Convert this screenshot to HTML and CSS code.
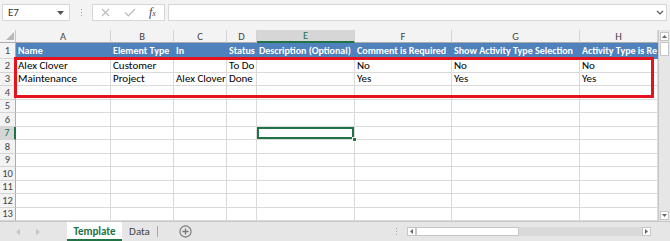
FILE: index.html
```html
<!DOCTYPE html>
<html lang="en">
<head>
    <meta charset="UTF-8">
    <title>Template - Excel</title>
    <link rel="stylesheet" href="styles.css">
</head>
<body>
<div class="app">
    <div class="formula-bar">
        <div class="name-box">E7<svg class="caret" width="7" height="4" viewBox="0 0 7 4"><path d="M0 0H7L3.5 4Z" fill="#555"/></svg></div>
        <div class="grip"><i></i><i></i><i></i></div>
        <div class="fx-box">
            <svg width="9" height="9" viewBox="0 0 9 9"><path d="M1 1L8 8M8 1L1 8" stroke="#bdbdbd" stroke-width="1.2"/></svg>
            <svg width="12" height="9" viewBox="0 0 12 9"><path d="M1 4.5L4.5 8L11 1" stroke="#bdbdbd" stroke-width="1.2" fill="none"/></svg>
            <span class="fx">f<small>x</small></span>
        </div>
        <div class="formula-input"><svg width="8" height="5" viewBox="0 0 8 5"><path d="M1 1L4 4L7 1" stroke="#555" stroke-width="1.2" fill="none"/></svg></div>
    </div>

    <div class="sheet">
        <div class="grid">
            <div class="corner"><svg width="8" height="8" viewBox="0 0 8 8"><path d="M8 0V8H0Z" fill="#b9b9b9"/></svg></div>
            <div class="ch">A</div><div class="ch">B</div><div class="ch">C</div><div class="ch">D</div><div class="ch sel">E</div><div class="ch">F</div><div class="ch">G</div><div class="ch">H</div>

            <div class="rh">1</div><div class="c hd">Name</div><div class="c hd">Element Type</div><div class="c hd">In</div><div class="c hd">Status</div><div class="c hd">Description (Optional)</div><div class="c hd">Comment is Required</div><div class="c hd">Show Activity Type Selection</div><div class="c hd">Activity Type is Required</div>
            <div class="rh">2</div><div class="c">Alex Clover</div><div class="c">Customer</div><div class="c"></div><div class="c">To Do</div><div class="c"></div><div class="c">No</div><div class="c">No</div><div class="c">No</div>
            <div class="rh">3</div><div class="c">Maintenance</div><div class="c">Project</div><div class="c">Alex Clover</div><div class="c">Done</div><div class="c"></div><div class="c">Yes</div><div class="c">Yes</div><div class="c">Yes</div>
            <div class="rh">4</div><div class="c"></div><div class="c"></div><div class="c"></div><div class="c"></div><div class="c"></div><div class="c"></div><div class="c"></div><div class="c"></div>
            <div class="rh">5</div><div class="c"></div><div class="c"></div><div class="c"></div><div class="c"></div><div class="c"></div><div class="c"></div><div class="c"></div><div class="c"></div>
            <div class="rh">6</div><div class="c"></div><div class="c"></div><div class="c"></div><div class="c"></div><div class="c"></div><div class="c"></div><div class="c"></div><div class="c"></div>
            <div class="rh sel">7</div><div class="c"></div><div class="c"></div><div class="c"></div><div class="c"></div><div class="c active"></div><div class="c"></div><div class="c"></div><div class="c"></div>
            <div class="rh">8</div><div class="c"></div><div class="c"></div><div class="c"></div><div class="c"></div><div class="c"></div><div class="c"></div><div class="c"></div><div class="c"></div>
            <div class="rh">9</div><div class="c"></div><div class="c"></div><div class="c"></div><div class="c"></div><div class="c"></div><div class="c"></div><div class="c"></div><div class="c"></div>
            <div class="rh">10</div><div class="c"></div><div class="c"></div><div class="c"></div><div class="c"></div><div class="c"></div><div class="c"></div><div class="c"></div><div class="c"></div>
            <div class="rh">11</div><div class="c"></div><div class="c"></div><div class="c"></div><div class="c"></div><div class="c"></div><div class="c"></div><div class="c"></div><div class="c"></div>
            <div class="rh">12</div><div class="c"></div><div class="c"></div><div class="c"></div><div class="c"></div><div class="c"></div><div class="c"></div><div class="c"></div><div class="c"></div>
            <div class="rh">13</div><div class="c"></div><div class="c"></div><div class="c"></div><div class="c"></div><div class="c"></div><div class="c"></div><div class="c"></div><div class="c"></div>

            <!-- red annotation box around the data rows -->
            <div class="annotation"></div>
        </div>

        <div class="vscroll">
            <div class="sbtn"><svg width="5" height="3" viewBox="0 0 5 3"><path d="M0 3H5L2.5 0Z" fill="#666"/></svg></div>
            <div class="vthumb"></div>
            <div class="vtrack"></div>
            <div class="sbtn"><svg width="5" height="3" viewBox="0 0 5 3"><path d="M0 0H5L2.5 3Z" fill="#666"/></svg></div>
        </div>
    </div>

    <div class="tabs">
        <div class="tab-nav">
            <svg width="4" height="6" viewBox="0 0 4 6"><path d="M4 0V6L0 3Z" fill="#c4c4c4"/></svg>
            <svg width="4" height="6" viewBox="0 0 4 6"><path d="M0 0V6L4 3Z" fill="#c4c4c4"/></svg>
        </div>
        <div class="tab active">Template</div>
        <div class="tab">Data</div>
        <div class="tab-sep"></div>
        <div class="add-sheet"><svg width="13" height="13" viewBox="0 0 13 13"><circle cx="6.5" cy="6.5" r="5.6" fill="none" stroke="#777" stroke-width="1.1"/><path d="M6.5 3.5V9.5M3.5 6.5H9.5" stroke="#777" stroke-width="1.3"/></svg></div>
        <div class="split-grip"><i></i><i></i><i></i></div>
        <div class="hscroll">
            <div class="sbtn"><svg width="3" height="5" viewBox="0 0 3 5"><path d="M3 0V5L0 2.5Z" fill="#666"/></svg></div>
            <div class="hthumb"></div>
            <div class="htrack"></div>
            <div class="sbtn"><svg width="3" height="5" viewBox="0 0 3 5"><path d="M0 0V5L3 2.5Z" fill="#666"/></svg></div>
        </div>
    </div>
</div>
</body>
</html>
```

FILE: styles.css
```css
body {
    margin: 0;
    font-family: Carlito, Lato, "Liberation Sans", sans-serif;
    font-size: 11px;
    color: #000;
    background: #fff;
}
.app {
    width: 670px;
    height: 241px;
    overflow: hidden;
    display: flex;
    flex-direction: column;
}

/* formula bar */
.formula-bar {
    height: 30px;
    box-sizing: border-box;
    padding: 4px 3px 9px 2px;
    background: #f3f3f3;
    display: flex;
    align-items: stretch;
}
.name-box {
    width: 68px;
    box-sizing: border-box;
    background: #fff;
    border: 1px solid #d6d6d6;
    padding: 0 5px;
    display: flex;
    align-items: center;
    justify-content: space-between;
    color: #333;
}
.grip {
    width: 22px;
    display: flex;
    flex-direction: column;
    align-items: center;
    justify-content: center;
    gap: 2px;
}
.grip i, .split-grip i {
    width: 1px;
    height: 1px;
    background: #a0a0a0;
}
.fx-box {
    width: 73px;
    box-sizing: border-box;
    background: #fff;
    border: 1px solid #d6d6d6;
    display: flex;
    align-items: center;
    padding: 0 8px 0 8px;
    gap: 14px;
}
.fx {
    font-family: "Liberation Serif", serif;
    font-style: italic;
    font-size: 12px;
    color: #444;
    margin-left: -1px;
}
.fx small {
    font-size: 8px;
}
.formula-input {
    flex: 1;
    margin-left: 3px;
    background: #fff;
    border: 1px solid #d6d6d6;
    display: flex;
    align-items: center;
    justify-content: flex-end;
    padding-right: 2px;
}

/* grid */
.sheet {
    display: flex;
    height: 191px;
}
.grid {
    position: relative;
    width: 658px;
    display: grid;
    grid-template-columns: 16px 95px 63px 53px 30px 98px 97px 128px 78px;
    grid-template-rows: 13px 16px repeat(12, 13.5px);
}
.corner, .ch, .rh {
    background: #f3f3f3;
    color: #444;
    box-sizing: border-box;
    display: flex;
    align-items: center;
    justify-content: center;
}
.corner {
    border-right: 1px solid #c8c8c8;
    border-bottom: 1px solid #ababab;
    align-items: flex-end;
    justify-content: flex-end;
    padding: 0 1px 2px 0;
}
.ch {
    border-right: 1px solid #d4d4d4;
    border-bottom: 1px solid #ababab;
    font-size: 10.5px;
}
.ch.sel {
    background: #d6d6d6;
    color: #217346;
    border-bottom: 2px solid #217346;
}
.rh {
    border-right: 1px solid #ababab;
    border-bottom: 1px solid #d4d4d4;
    font-size: 10.5px;
}
.rh.sel {
    background: #d6d6d6;
    color: #217346;
    border-right: 2px solid #217346;
}
.c {
    box-sizing: border-box;
    border-right: 1px solid #dadada;
    border-bottom: 1px solid #dadada;
    padding: 0 2px;
    white-space: nowrap;
    overflow: hidden;
    display: flex;
    align-items: center;
}
.c.hd {
    background: #4f81bd;
    color: #fff;
    font-weight: bold;
    font-size: 10px;
    border-color: #4f81bd;
}
.c.active {
    position: relative;
    overflow: visible;
    box-shadow: inset 0 0 0 2px #217346;
}
.c.active::after {
    content: "";
    position: absolute;
    right: -3px;
    bottom: -3px;
    width: 5px;
    height: 5px;
    background: #217346;
    border: 1px solid #fff;
    box-sizing: border-box;
}
.annotation {
    position: absolute;
    left: 14px;
    top: 27px;
    width: 640px;
    height: 41px;
    box-sizing: border-box;
    border: 3px solid #e5131d;
}

/* scrollbars */
.vscroll {
    width: 12px;
    background: #e6e6e6;
    border-left: 1px solid #c8c8c8;
    box-sizing: border-box;
    display: flex;
    flex-direction: column;
    padding: 2px 0 1px 1px;
}
.sbtn {
    width: 9px;
    height: 9px;
    background: #fff;
    border: 1px solid #c6c6c6;
    box-sizing: border-box;
    display: flex;
    align-items: center;
    justify-content: center;
}
.vthumb {
    width: 9px;
    height: 14px;
    margin-top: 1px;
    background: #fff;
    border: 1px solid #c6c6c6;
    box-sizing: border-box;
}
.vtrack {
    flex: 1;
}

/* sheet tabs */
.tabs {
    flex: 1;
    background: #e6e6e6;
    border-top: 1px solid #c6c6c6;
    display: flex;
    align-items: stretch;
    font-size: 11px;
}
.tab-nav {
    width: 67px;
    display: flex;
    align-items: center;
    padding-left: 16px;
    box-sizing: border-box;
    gap: 16px;
}
.tab {
    display: flex;
    align-items: center;
    justify-content: center;
    color: #444;
    width: 35px;
}
.tab.active {
    width: 55px;
    background: #fff;
    color: #217346;
    font-weight: bold;
    border-bottom: 2px solid #217346;
    box-sizing: border-box;
    padding-top: 2px;
}
.tab-sep {
    width: 1px;
    margin: 4px 0 4px 0;
    background: #a8a8a8;
}
.add-sheet {
    margin-left: 21px;
    display: flex;
    align-items: center;
}
.split-grip {
    margin-left: 204px;
    display: flex;
    flex-direction: column;
    justify-content: center;
    gap: 2px;
}
.hscroll {
    margin-left: 10px;
    width: 244px;
    display: flex;
    align-items: center;
}
.hthumb {
    width: 103px;
    height: 9px;
    background: #fff;
    border: 1px solid #c6c6c6;
    box-sizing: border-box;
}
.htrack {
    flex: 1;
    height: 9px;
    background: #d9d9d9;
}
```
